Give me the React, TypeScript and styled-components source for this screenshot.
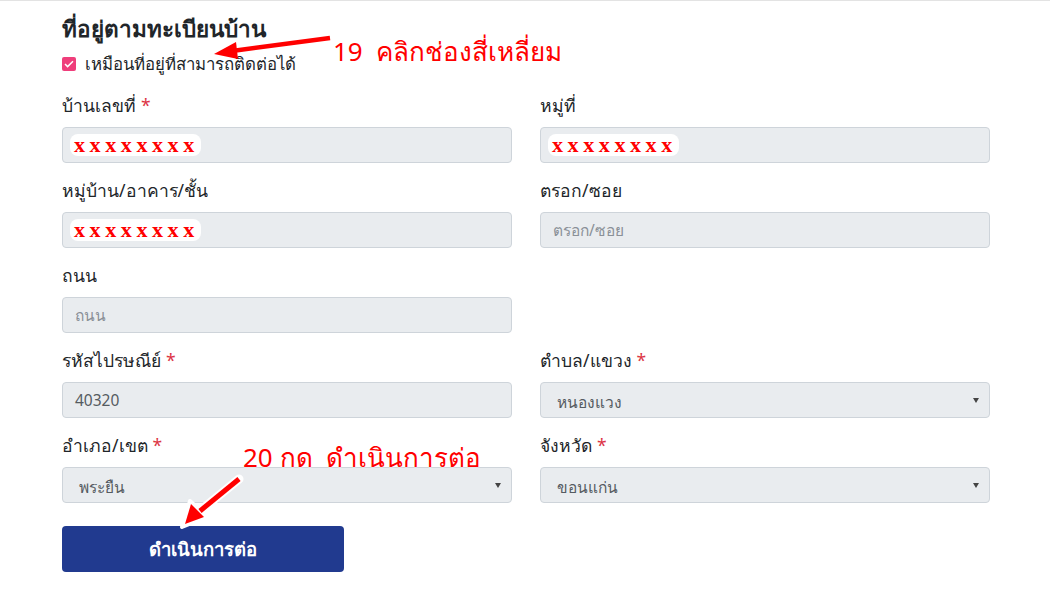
import React from 'react'
import styled, { createGlobalStyle } from 'styled-components'

const Global = createGlobalStyle`
  html, body {
    margin: 0;
    padding: 0;
    background: #fff;
  }
  body {
    font-family: Tahoma, 'Noto Sans', 'DejaVu Sans', sans-serif;
    color: #212529;
  }
`

const Page = styled.div`
  position: relative;
  width: 1050px;
  height: 600px;
  border-top: 1px solid #e3e3e3;
  box-sizing: border-box;
  padding: 13px 0 0 62px;
  overflow: hidden;
`

const Title = styled.h2`
  margin: 0;
  font-size: 22.5px;
  font-weight: 700;
  line-height: 30px;
`

const CheckRow = styled.label`
  display: flex;
  align-items: center;
  gap: 9px;
  margin-top: 8px;
  font-size: 16.8px;
  line-height: 24px;
`

const CheckBox = styled.span`
  width: 14px;
  height: 14px;
  border-radius: 2px;
  background: #ef3e7b;
  display: flex;
  align-items: center;
  justify-content: center;
`

const Grid = styled.div`
  display: grid;
  grid-template-columns: 450px 450px;
  column-gap: 28px;
  row-gap: 15px;
  margin-top: 17px;
`

const Field = styled.div`
  display: flex;
  flex-direction: column;
  gap: 10px;
`

const Label = styled.div`
  font-size: 17.5px;
  line-height: 24px;
`

const Star = styled.span`
  color: #dc3545;
  margin-left: 5px;
`

const Box = styled.div<{ $select?: boolean }>`
  position: relative;
  height: 36px;
  box-sizing: border-box;
  background: #e9ecef;
  border: 1px solid #ced4da;
  border-radius: 4px;
  display: flex;
  align-items: center;
  padding: ${(p) => (p.$select ? '5px 16px 0 16px' : '0 12px')};
  font-size: 15.5px;
`

const Value = styled.span<{ $muted?: boolean }>`
  color: ${(p) => (p.$muted ? '#8a9097' : '#555b61')};
`

const Caret = styled.span`
  position: absolute;
  right: 10px;
  top: 50%;
  margin-top: -2px;
  border-left: 3.5px solid transparent;
  border-right: 3.5px solid transparent;
  border-top: 5px solid #444;
`

const Redact = styled.span`
  margin-left: -5px;
  background: #fff;
  border-radius: 8px;
  padding: 0 2px 0 4px;
  color: #ff0000;
  font-family: 'Liberation Serif', serif;
  font-weight: 700;
  font-size: 22px;
  line-height: 22px;
  letter-spacing: 4.6px;
`

const Button = styled.button`
  margin-top: 23px;
  width: 282px;
  height: 46px;
  border: none;
  border-radius: 4px;
  background: #213a8f;
  color: #fff;
  font-family: inherit;
  font-size: 18.5px;
  font-weight: 700;
`

const Note = styled.div<{ $x: number; $y: number }>`
  position: absolute;
  left: ${(p) => p.$x}px;
  top: ${(p) => p.$y}px;
  color: #ff0000;
  font-size: 26px;
  line-height: 30px;
  white-space: pre;
  text-shadow: 0 0 2px #fff, 0 0 2px #fff;
`

const Overlay = styled.svg`
  position: absolute;
  left: 0;
  top: 0;
  pointer-events: none;
`

type F = {
  label: string
  req?: boolean
  value?: string
  placeholder?: string
  redact?: boolean
  select?: boolean
}

const fields: (F | null)[] = [
  { label: 'บ้านเลขที่', req: true, redact: true },
  { label: 'หมู่ที่', redact: true },
  { label: 'หมู่บ้าน/อาคาร/ชั้น', redact: true },
  { label: 'ตรอก/ซอย', placeholder: 'ตรอก/ซอย' },
  { label: 'ถนน', placeholder: 'ถนน' },
  null,
  { label: 'รหัสไปรษณีย์', req: true, value: '40320' },
  { label: 'ตำบล/แขวง', req: true, value: 'หนองแวง', select: true },
  { label: 'อำเภอ/เขต', req: true, value: 'พระยืน', select: true },
  { label: 'จังหวัด', req: true, value: 'ขอนแก่น', select: true },
]

export default function App() {
  return (
    <>
      <Global />
      <Page>
        <Title>ที่อยู่ตามทะเบียนบ้าน</Title>
        <CheckRow>
          <CheckBox>
            <svg width="10" height="8" viewBox="0 0 10 8">
              <path d="M1 4l2.6 2.6L9 1.2" fill="none" stroke="#fff" strokeWidth="1.5" />
            </svg>
          </CheckBox>
          เหมือนที่อยู่ที่สามารถติดต่อได้
        </CheckRow>
        <Grid>
          {fields.map((f, i) =>
            f ? (
              <Field key={i}>
                <Label>
                  {f.label}
                  {f.req && <Star>*</Star>}
                </Label>
                <Box $select={f.select}>
                  {f.redact && <Redact>xxxxxxxx</Redact>}
                  {f.value && <Value>{f.value}</Value>}
                  {f.placeholder && <Value $muted>{f.placeholder}</Value>}
                  {f.select && <Caret />}
                </Box>
              </Field>
            ) : (
              <div key={i} />
            )
          )}
        </Grid>
        <Button>ดำเนินการต่อ</Button>

        <Note $x={333} $y={35}>19  คลิกช่องสี่เหลี่ยม</Note>
        <Note $x={243} $y={441}>20 กด  ดำเนินการต่อ</Note>

        <Overlay width="1050" height="600">
          <line x1="330" y1="37" x2="232" y2="50" stroke="#ff0000" strokeWidth="4.5" />
          <polygon points="214,53 236,41 238,58" fill="#ff0000" />
          <line x1="239" y1="478" x2="200" y2="510" stroke="#fff" strokeWidth="9" strokeLinecap="round" />
          <polygon points="182,526 190,500 207,516" fill="#fff" stroke="#fff" strokeWidth="4" strokeLinejoin="round" />
          <line x1="239" y1="478" x2="200" y2="510" stroke="#ff0000" strokeWidth="5" />
          <polygon points="185,523 191,503 204,516" fill="#ff0000" />
        </Overlay>
      </Page>
    </>
  )
}
